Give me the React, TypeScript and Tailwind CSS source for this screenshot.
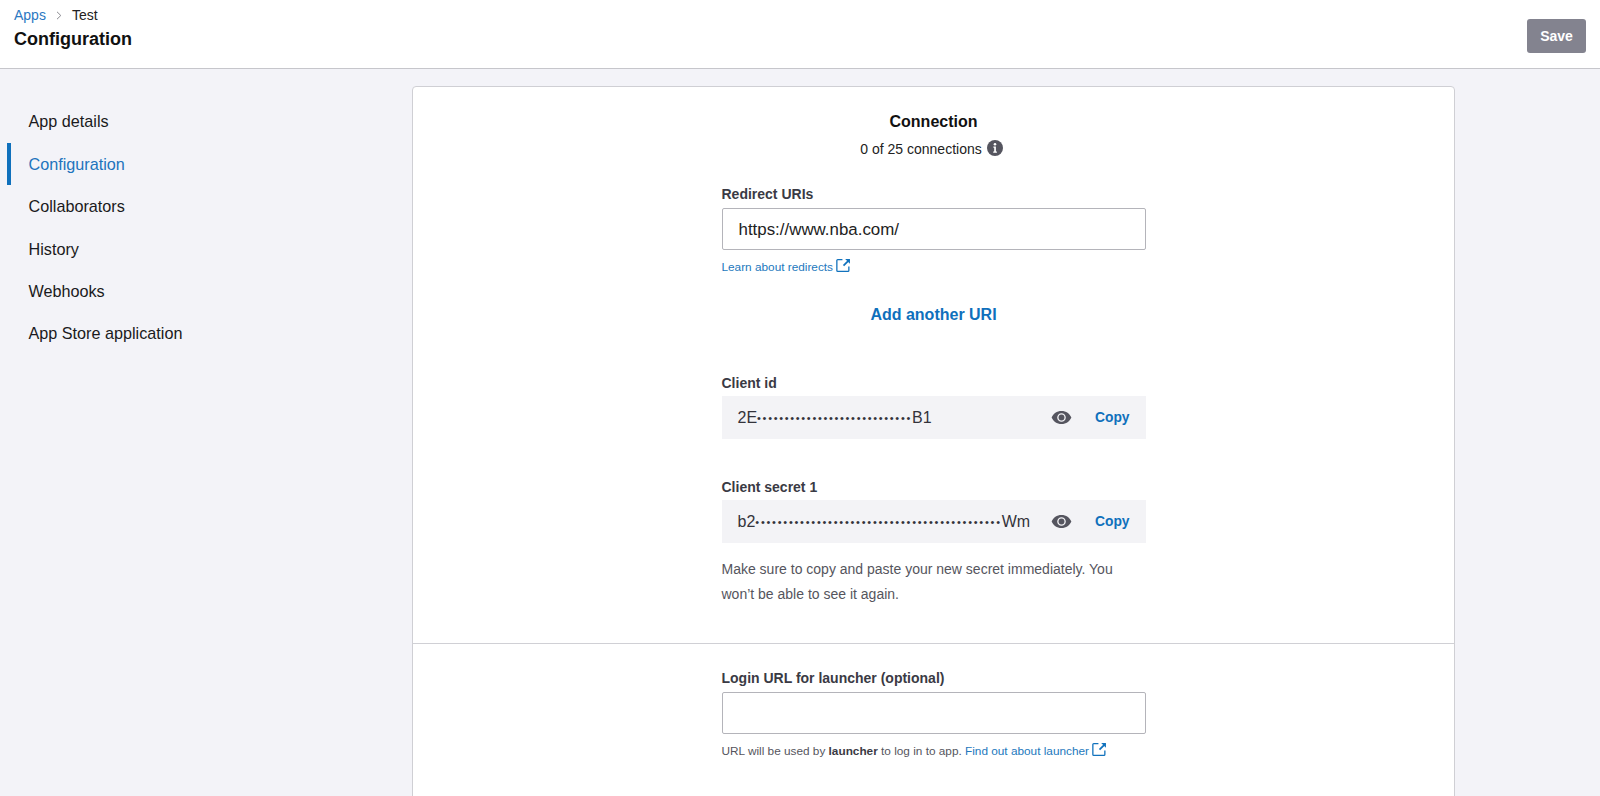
import React from "react";

const ExternalIcon = () => (
  <svg width="15" height="15" viewBox="0 0 14 14" fill="none" className="ml-[3px] mb-[3px] inline-block align-middle" stroke="#1172bd">
    <path d="M6 1.6H1.6a.8.8 0 0 0-.8.8v9.2a.8.8 0 0 0 .8.8h9.6a.8.8 0 0 0 .8-.8V8" strokeWidth="1.2" />
    <path d="M7 7.2 12.4 1.8" strokeWidth="1.6" />
    <path d="M8.6 1h4.4v4.4z" fill="#1172bd" stroke="none" />
  </svg>
);

const InfoIcon = () => (
  <svg width="16" height="16" viewBox="0 0 16 16" className="ml-[5px] mr-[4px] mb-[2px]">
    <circle cx="8" cy="8" r="8" fill="#55555f" />
    <circle cx="8" cy="4.2" r="1.3" fill="#fff" />
    <path d="M6.4 6.6h2.500v5h1v1.200H6.200v-1.200h1v-3.800h-.8z" fill="#fff" />
  </svg>
);

const EyeIcon = () => (
  <svg width="21" height="15" viewBox="0 0 20 14">
    <path fillRule="evenodd" d="M10 .8C5.600.8 2 3.400.6 7c1.400 3.600 5 6.200 9.400 6.200s8-2.600 9.400-6.200C18 3.400 14.400.8 10 .8zm0 10.300a4.100 4.100 0 1 1 0-8.200 4.100 4.100 0 0 1 0 8.200z" fill="#55555f" />
    <circle cx="10" cy="7" r="2.800" fill="#55555f" />
  </svg>
);

const Label = ({ children }: { children: React.ReactNode }) => (
  <div className="text-[14px] leading-[16px] font-bold text-[#3a3a44]">{children}</div>
);

const SecretRow = ({ head, dots, tail, dotClass }: { head: string; dots: number; tail: string; dotClass: string }) => (
  <div className="mt-[5px] flex h-[43px] items-center bg-[#f3f3f6] pl-[16px] pr-[16px] text-[16px] text-[#33333b]">
    <span className="flex-1">
      {head}
      <span className={dotClass}>{"•".repeat(dots)}</span>
      {tail}
    </span>
    <EyeIcon />
    <span className="ml-[23px] mt-[2px] text-[13.800px] font-bold text-[#0f70bc]">Copy</span>
  </div>
);

const navItems = ["App details", "Configuration", "Collaborators", "History", "Webhooks", "App Store application"];

export default function App() {
  const font = { fontFamily: '"Liberation Sans", Arial, sans-serif' };
  return (
    <div style={font} className="flex h-screen flex-col overflow-hidden bg-[#f3f3f8] text-[#111]">
      <header className="flex h-[69px] shrink-0 items-start justify-between border-b border-[#c6c6cb] bg-white pl-[14px] pr-[14px]">
        <div>
          <div className="mt-[7px] flex items-center text-[14px] leading-[16px]">
            <span className="text-[#2b78c2]">Apps</span>
            <svg width="6" height="9" viewBox="0 0 6 9" fill="none" stroke="#8a8a90" className="mx-[10px]">
              <path d="M1 .8 4.800 4.500 1 8.200" strokeWidth="1" />
            </svg>
            <span className="text-[#222]">Test</span>
          </div>
          <div className="mt-[4px] text-[18px] font-bold leading-[24px] text-[#111]">Configuration</div>
        </div>
        <button className="mt-[19px] h-[34px] w-[59px] rounded-[3px] bg-[#83838f] text-[14px] font-bold text-white">Save</button>
      </header>
      <div className="flex min-h-0 flex-1">
        <nav className="w-[412px] shrink-0 pt-[31.400px]">
          <ul>
            {navItems.map((item, i) => (
              <li
                key={item}
                className={
                  i === 1
                    ? "ml-[7px] flex h-[42.400px] items-center border-l-[4px] border-[#0f70bc] pl-[17.500px] text-[16.200px] text-[#2273bd]"
                    : "ml-[7px] flex h-[42.400px] items-center pl-[21.500px] text-[16.200px] text-[#1a1a20]"
                }
              >
                {item}
              </li>
            ))}
          </ul>
        </nav>
        <main className="mt-[17px] w-[1043px] shrink-0 self-start rounded-t-[4px] border border-[#cfcfd4] bg-white">
          <section className="flex flex-col items-center border-b border-[#d0d0d5] pt-[26px] pb-[36px]">
            <h2 className="text-[16px] font-bold leading-[18px] text-[#111]">Connection</h2>
            <div className="mt-[9px] flex items-center text-[14px] leading-[18px] text-[#222]">
              0 of 25 connections
              <InfoIcon />
            </div>
            <div className="mt-[28px] w-[424px]">
              <Label>Redirect URIs</Label>
              <input
                readOnly
                value="https://www.nba.com/"
                className="mt-[6px] h-[42px] w-full rounded-[2px] border border-[#b4b4ba] bg-white pl-[16px] pt-[1px] text-[16.900px] text-[#222] outline-none"
              />
              <div className="mt-[8px] flex items-center text-[11.800px] leading-[16px] text-[#2378bd]">
                Learn about redirects
                <ExternalIcon />
              </div>
              <div className="mt-[30px] text-center text-[16px] font-bold leading-[18px] text-[#0f70bc]">Add another URI</div>
              <div className="mt-[51px]">
                <Label>Client id</Label>
                <SecretRow head="2E" dots={28} tail="B1" dotClass="align-[1.5px] text-[11px] tracking-[1.68px]" />
              </div>
              <div className="mt-[40px]">
                <Label>Client secret 1</Label>
                <SecretRow head="b2" dots={44} tail="Wm" dotClass="align-[1.5px] text-[11px] tracking-[1.75px]" />
              </div>
              <p className="mt-[14px] text-[14px] leading-[25px] text-[#55555d]">
                Make sure to copy and paste your new secret immediately. You won’t be able to see it again.
              </p>
            </div>
          </section>
          <section className="flex flex-col items-center pt-[26px] pb-[60px]">
            <div className="w-[424px]">
              <Label>Login URL for launcher (optional)</Label>
              <input
                readOnly
                className="mt-[6px] h-[42px] w-full rounded-[2px] border border-[#b4b4ba] bg-white outline-none"
              />
              <div className="mt-[8px] flex items-center whitespace-nowrap text-[11.800px] leading-[16px] text-[#55555d]">
                <span>
                  URL will be used by <b className="text-[#3a3a44]">launcher</b> to log in to app.{" "}
                  <span className="text-[#2378bd]">Find out about launcher</span>
                </span>
                <ExternalIcon />
              </div>
            </div>
          </section>
        </main>
      </div>
    </div>
  );
}
